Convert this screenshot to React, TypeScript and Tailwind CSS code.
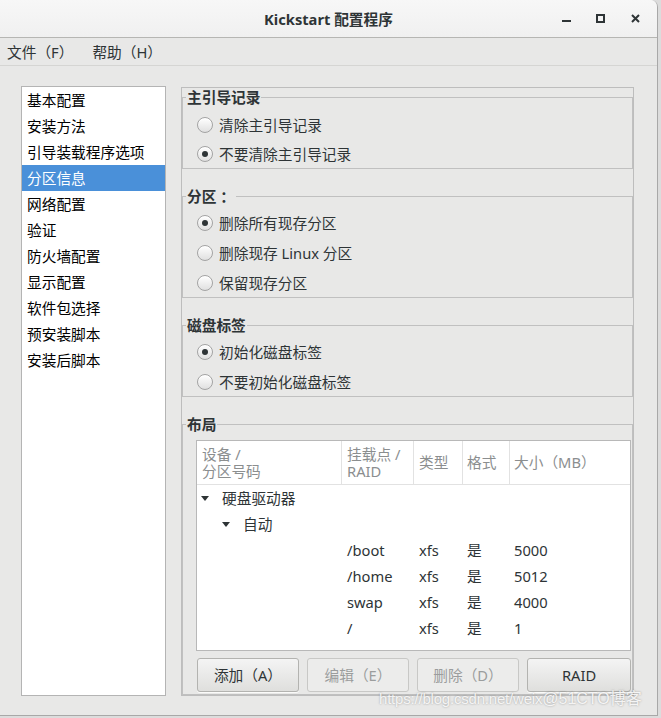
import React from 'react';

const FONT = "font-['Noto_Sans','Noto_Sans_CJK_SC',sans-serif]";

const navItems = [
  '基本配置',
  '安装方法',
  '引导装载程序选项',
  '分区信息',
  '网络配置',
  '验证',
  '防火墙配置',
  '显示配置',
  '软件包选择',
  '预安装脚本',
  '安装后脚本',
];

const partitions = [
  { mount: '/boot', type: 'xfs', format: '是', size: '5000' },
  { mount: '/home', type: 'xfs', format: '是', size: '5012' },
  { mount: 'swap', type: 'xfs', format: '是', size: '4000' },
  { mount: '/', type: 'xfs', format: '是', size: '1' },
];

const Radio: React.FC<{ label: string; checked?: boolean }> = ({ label, checked }) => (
  <div className="flex h-[28px] items-center pl-[14px]">
    <span className="flex h-[16px] w-[16px] items-center justify-center rounded-full border border-[#a3a3a3] bg-linear-to-b from-white to-[#e0e0e0] shadow-[inset_0_1px_0_#fff]">
      {checked && <span className="h-[6px] w-[6px] rounded-full bg-[#2e3436]" />}
    </span>
    <span className="ml-[6px] text-[#2e3436]">{label}</span>
  </div>
);

const Frame: React.FC<{ title: string; className?: string; children: React.ReactNode }> = ({
  title,
  className,
  children,
}) => (
  <fieldset className={`border border-[#c0c0c0] ${className ?? ''}`}>
    <legend className="ml-[3px] px-[1px] text-[14.7px] leading-[18px] font-bold text-[#2e3436]">{title}</legend>
    {children}
  </fieldset>
);

const Triangle = () => (
  <svg width="8" height="5" viewBox="0 0 8 5" className="shrink-0">
    <path d="M0 0 L8 0 L4 5 Z" fill="#2e3436" />
  </svg>
);

export default function App() {
  return (
    <div className={`relative h-[718px] w-[661px] overflow-hidden bg-[#dcdcdc] text-[14.7px] leading-[18px] ${FONT}`}>
      <div className="flex h-[716px] w-[658px] flex-col overflow-hidden rounded-tr-[7px] border-r border-b border-[#a8a8a8] bg-[#e8e8e7]">
        {/* title bar */}
        <div className="relative flex h-[38px] shrink-0 items-center justify-center border-b border-[#b6b6b3] bg-linear-to-b from-[#f7f7f7] to-[#f0f0f0]">
          <span className="font-bold text-[#2e3436]">Kickstart 配置程序</span>
          <div className="absolute top-0 right-0 flex h-[37px] items-center">
            <svg width="34" height="37" viewBox="0 0 34 37">
              <rect x="7" y="20" width="9" height="2" fill="#2e3436" />
            </svg>
            <svg width="34" height="37" viewBox="0 0 34 37">
              <rect x="8" y="15" width="7" height="7" fill="none" stroke="#2e3436" strokeWidth="2" />
            </svg>
            <svg width="34" height="37" viewBox="0 0 34 37">
              <path d="M9 15 L16 22 M16 15 L9 22" stroke="#2e3436" strokeWidth="2" />
            </svg>
          </div>
        </div>

        {/* menu bar */}
        <div className="flex h-[28px] shrink-0 items-center border-b border-[#d5d5d3] pl-[7px] text-[#2e3436]">
          <span>文件（F）</span>
          <span className="ml-[19px]">帮助（H）</span>
        </div>

        {/* body */}
        <div className="flex flex-1 pt-[20px] pl-[21px]">
          <div className="h-[610px] w-[145px] border border-[#b4b4b4] bg-white">
            {navItems.map((item) => (
              <div
                key={item}
                className={`flex h-[26px] items-center pb-[1px] pl-[5px] ${
                  item === '分区信息' ? 'bg-[#4a90d9] text-white' : 'text-black'
                }`}
              >
                {item}
              </div>
            ))}
          </div>

          <div className="mt-[1px] ml-[15px] flex h-[609px] w-[453px] flex-col border border-[#bdbdbd]">
            <Frame title="主引导记录" className="pt-[5px]">
              <div className="flex flex-col gap-[1px]">
                <Radio label="清除主引导记录" />
                <Radio label="不要清除主引导记录" checked />
              </div>
            </Frame>

            <Frame title="分区 ：" className="mt-[18px] pt-[4px]">
              <div className="flex flex-col gap-[2px]">
                <Radio label="删除所有现存分区" checked />
                <Radio label="删除现存  Linux 分区" />
                <Radio label="保留现存分区" />
              </div>
            </Frame>

            <Frame title="磁盘标签" className="mt-[18px] pt-[4px]">
              <div className="flex flex-col gap-[2px]">
                <Radio label="初始化磁盘标签" checked />
                <Radio label="不要初始化磁盘标签" />
              </div>
            </Frame>

            <Frame title="布局" className="mt-[18px] pt-[7px] pb-[2px]">
              <div className="pl-[13px]">
                <div className="h-[211px] w-[435px] border border-[#b8b8b8] bg-white">
                  <div className="grid h-[44px] grid-cols-[144px_72px_49px_47px_1fr] border-b border-[#e2e2e2] leading-[17px] text-[#8b8e8f]">
                    <div className="flex flex-col justify-center pl-[5px]">
                      <span>设备 /</span>
                      <span>分区号码</span>
                    </div>
                    <div className="flex flex-col justify-center border-l border-[#e2e2e2] pl-[5px]">
                      <span>挂载点 /</span>
                      <span>RAID</span>
                    </div>
                    <div className="flex items-center border-l border-[#e2e2e2] pl-[5px]">类型</div>
                    <div className="flex items-center border-l border-[#e2e2e2] pl-[4px]">格式</div>
                    <div className="flex items-center border-l border-[#e2e2e2] pl-[4px]">大小（MB）</div>
                  </div>

                  <div className="text-[#2e3436]">
                    <div className="flex h-[26px] items-center pl-[4px]">
                      <Triangle />
                      <span className="ml-[13px]">硬盘驱动器</span>
                    </div>
                    <div className="flex h-[26px] items-center pl-[25px]">
                      <Triangle />
                      <span className="ml-[13px]">自动</span>
                    </div>
                    {partitions.map((p) => (
                      <div key={p.mount} className="grid h-[26px] grid-cols-[144px_72px_49px_47px_1fr] items-center">
                        <span />
                        <span className="pl-[6px]">{p.mount}</span>
                        <span className="pl-[6px]">{p.type}</span>
                        <span className="pl-[5px]">{p.format}</span>
                        <span className="pl-[5px]">{p.size}</span>
                      </div>
                    ))}
                  </div>
                </div>

                <div className="mt-[7px] flex gap-[8px] pl-[1px]">
                  <button className="h-[34px] w-[102px] rounded-[3px] border border-[#b3b3b0] bg-linear-to-b from-[#f4f4f4] to-[#dfdfdd] text-[#2e3436] shadow-[0_1px_0_rgba(255,255,255,0.8)]">
                    添加（A）
                  </button>
                  <button className="h-[34px] w-[102px] rounded-[3px] border border-[#c8c8c6] bg-[#ececeb] text-[#9b9d9d]">
                    编辑（E）
                  </button>
                  <button className="h-[34px] w-[102px] rounded-[3px] border border-[#c8c8c6] bg-[#ececeb] text-[#9b9d9d]">
                    删除（D）
                  </button>
                  <button className="h-[34px] w-[104px] rounded-[3px] border border-[#b3b3b0] bg-linear-to-b from-[#f4f4f4] to-[#dfdfdd] text-[#2e3436] shadow-[0_1px_0_rgba(255,255,255,0.8)]">
                    RAID
                  </button>
                </div>
              </div>
            </Frame>
          </div>
        </div>
      </div>

      {/* watermark */}
      <div className="pointer-events-none absolute top-[690px] left-[379px] flex items-baseline whitespace-nowrap text-white/85 [text-shadow:0_0_2px_rgba(90,90,90,0.6)] font-['Liberation_Sans','Noto_Sans_CJK_SC',sans-serif]">
        <span className="text-[15px] tracking-[-0.2px]">https://blog.csdn.net/weix</span>
        <span className="text-[16px]">@51CTO博客</span>
      </div>
    </div>
  );
}
